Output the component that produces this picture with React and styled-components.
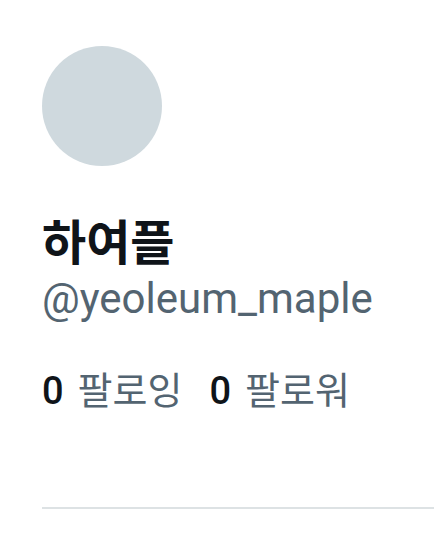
import React from 'react'
import styled, { createGlobalStyle } from 'styled-components'

const GlobalStyle = createGlobalStyle`
  body {
    margin: 0;
    background: #ffffff;
    font-family: Roboto, "Noto Sans CJK KR", sans-serif;
  }
`

const Page = styled.div`
  width: 434px;
  height: 549px;
  padding-top: 46px;
  padding-left: 42px;
  box-sizing: border-box;
  overflow: hidden;
`

const Avatar = styled.div`
  width: 120px;
  height: 120px;
  border-radius: 50%;
  background: #cfd9de;
`

const Name = styled.h1`
  margin: 45px 0 0;
  font-family: "Noto Sans CJK KR", sans-serif;
  font-size: 48px;
  font-weight: 700;
  line-height: 56px;
  color: #0f1419;
`

const Handle = styled.div`
  margin-top: 7px;
  font-size: 42px;
  line-height: 50px;
  color: #536471;
`

const Stats = styled.div`
  display: flex;
  gap: 27px;
  margin-top: 43px;
  font-size: 38px;
  line-height: 48px;
`

const Stat = styled.span`
  color: #536471;

  b {
    font-weight: 500;
    color: #0f1419;
    margin-right: 14px;
  }
`

const Divider = styled.hr`
  margin: 92px 0 0;
  border: none;
  border-top: 2px solid #dde2e4;
`

export default function App() {
  return (
    <Page>
      <GlobalStyle />
      <Avatar />
      <Name>하여플</Name>
      <Handle>@yeoleum_maple</Handle>
      <Stats>
        <Stat><b>0</b>팔로잉</Stat>
        <Stat><b>0</b>팔로워</Stat>
      </Stats>
      <Divider />
    </Page>
  )
}
